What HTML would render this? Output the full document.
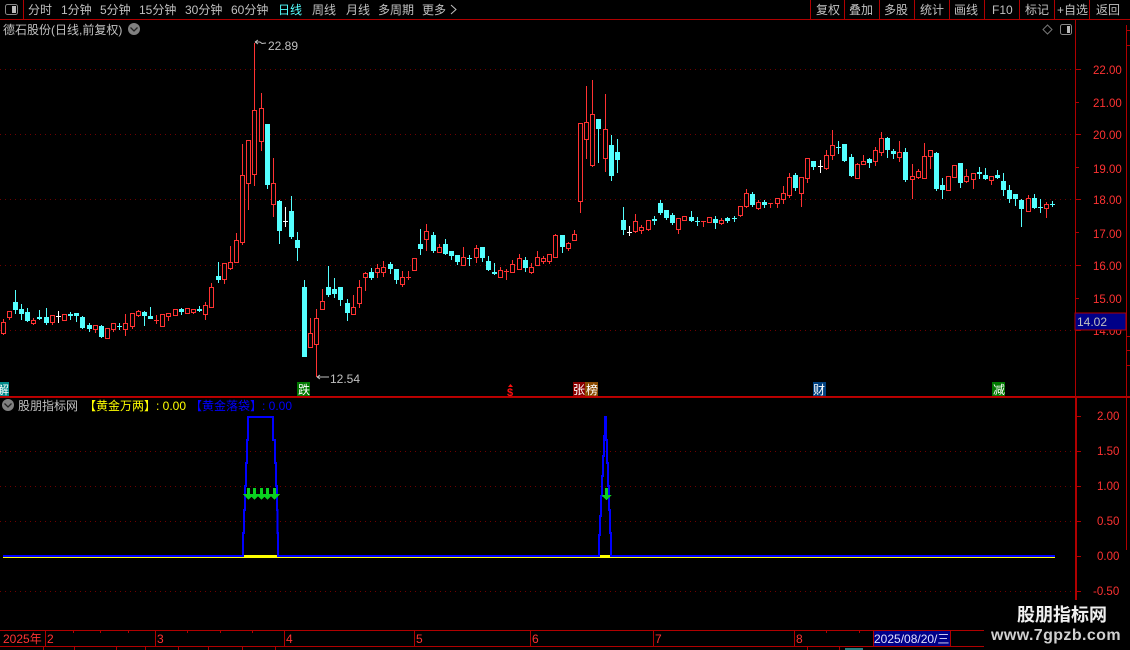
<!DOCTYPE html>
<html lang="zh"><head><meta charset="utf-8"><title>股朋指标网</title>
<style>
html,body{margin:0;padding:0;background:#000;width:1130px;height:650px;overflow:hidden}
svg{display:block;position:absolute;left:0;top:0}
text{font-family:"Liberation Sans","WenQuanYi Zen Hei","Noto Sans CJK SC",sans-serif;font-size:12px;fill:#c0c0c0}
.l{fill:#ff3232;font-size:11.5px}
.d{fill:#ff3232;font-size:12px}
.ln{stroke:#b00000;stroke-width:1;fill:none;shape-rendering:crispEdges}
.g{stroke:#700000;stroke-width:1;stroke-dasharray:1 4;fill:none;shape-rendering:crispEdges}
.c{shape-rendering:crispEdges}
</style></head><body>
<svg width="1130" height="650" viewBox="0 0 1130 650" xmlns="http://www.w3.org/2000/svg">
<!-- toolbar -->
<path class="ln" d="M0 19.5H1130M23.5 0V19M810.5 0V19M844.5 0V19M879.5 0V19M914.5 0V19M949.5 0V19M984.5 0V19M1019.5 0V19M1054.5 0V19M1089.5 0V19"/>
<rect x="5.5" y="4.5" width="12" height="10" rx="2" fill="none" stroke="#888"/><rect x="12" y="6" width="4" height="7" fill="#bbb"/>
<text x="28" y="14">分时</text><text x="61" y="14">1分钟</text><text x="100" y="14">5分钟</text><text x="139" y="14">15分钟</text><text x="185" y="14">30分钟</text><text x="231" y="14">60分钟</text><text x="278" y="14" style="fill:#54ffff">日线</text><text x="312" y="14">周线</text><text x="346" y="14">月线</text><text x="378" y="14">多周期</text><text x="422" y="14">更多</text>
<path d="M451 5l5 4.500l-5 4.500" fill="none" stroke="#c0c0c0"/>
<text x="816" y="14">复权</text><text x="849" y="14">叠加</text><text x="884" y="14">多股</text><text x="920" y="14">统计</text><text x="954" y="14">画线</text><text x="992" y="14">F10</text><text x="1025" y="14">标记</text><text x="1057" y="14">+自选</text><text x="1096" y="14">返回</text>
<text x="3" y="34">德石股份(日线,前复权)</text>
<circle cx="134" cy="29" r="6" fill="#808080"/><path d="M130.500 27.500l3.500 3.500l3.500-3.500" fill="none" stroke="#222" stroke-width="1.300"/>
<path d="M1047.500 25l4.500 4.500l-4.500 4.500l-4.500-4.500z" fill="none" stroke="#777"/>
<rect x="1060.500" y="24.500" width="11" height="10" rx="2" fill="none" stroke="#888"/><rect x="1067" y="26" width="3" height="7" fill="#bbb"/>
<!-- axes -->
<path class="ln" d="M1075.500 19V630M1076.500 397V630M0 396.500H1130M0 397.500H1130M1126.500 25V550"/>
<path class="ln" d="M1075 69.500h6M1075 102.500h4M1075 134.500h6M1075 167.500h4M1075 199.500h6M1075 232.500h4M1075 265.500h6M1075 298.500h4M1075 330.500h6M1075 416.500h6M1075 451.500h6M1075 486.500h6M1075 521.500h6M1075 556.500h6M1075 591.500h6M1126 30.500h4M1126 45.500h4M1126 336.500h4M1126 350.500h4M1126 365.500h4"/>
<path class="g" d="M0 69.500H1075M0 134.500H1075M0 199.500H1075M0 265.500H1075M0 330.500H1075M0 451.500H1075M0 486.500H1075M0 521.500H1075M0 591.500H1075"/>
<text class="l" x="1093" y="74">22.00</text><text class="l" x="1093" y="107">21.00</text><text class="l" x="1093" y="139">20.00</text><text class="l" x="1093" y="173">19.00</text><text class="l" x="1093" y="204">18.00</text><text class="l" x="1093" y="238">17.00</text><text class="l" x="1093" y="270">16.00</text><text class="l" x="1093" y="303">15.00</text><text class="l" x="1093" y="335">14.00</text>
<rect x="1075" y="313" width="51" height="17" fill="#000088" stroke="#b00000"/>
<text x="1077" y="326">14.02</text>
<text class="l" x="1097" y="420">2.00</text><text class="l" x="1097" y="455">1.50</text><text class="l" x="1097" y="490">1.00</text><text class="l" x="1097" y="525">0.50</text><text class="l" x="1097" y="560">0.00</text><text class="l" x="1093" y="595">-0.50</text>
<!-- red wicks -->
<path class="c" fill="none" stroke="#ff3232" d="M3.500 319V335M9.500 311V320M33.500 318V325M52.500 315V325M64.500 314V320M95.500 325V333M107.500 328V338M113.500 323V332M125.500 314V336M132.500 313V329M138.500 310V317M156.500 315V324M154 320.500h5M162.500 314V327M168.500 313V321M175.500 309V316M187.500 308V313M193.500 309V314M205.500 302V320M211.500 283V307M224.500 263V284M230.500 246V270M236.500 233V262M242.500 144V245M248.500 140V210M254.500 43V186M261.500 93V151M273.500 158V217M310.500 318V347M316.500 309V377M322.500 289V309M353.500 295V314M359.500 280V308M365.500 272V291M377.500 264V278M383.500 261V277M402.500 271V287M408.500 271V280M406 277.500h5M414.500 258V270M426.500 224V251M439.500 244V252M463.500 247V266M476.500 245V263M500.500 267V277M506.500 269V280M504 271.500h5M512.500 260V272M519.500 254V269M531.500 263V274M537.500 251V265M543.500 256V264M549.500 254V264M555.500 234V257M568.500 242V251M574.500 230V241M580.500 123V213M586.500 86V159M592.500 80V167M605.500 94V172M635.500 214V233M641.500 225V234M648.500 220V231M678.500 218V234M684.500 216V221M703.500 221V227M701 221.500h5M709.500 217V222M721.500 218V225M740.500 206V217M746.500 189V208M758.500 200V210M770.500 203V208M768 203.500h5M777.500 198V208M783.500 186V204M789.500 173V198M801.500 177V207M807.500 158V183M826.500 150V170M832.500 130V160M857.500 163V178M863.500 155V164M875.500 147V166M881.500 132V156M899.500 141V162M912.500 164V199M918.500 169V179M924.500 143V178M930.500 150V169M948.500 176V191M954.500 165V177M966.500 169V183M973.500 173V189M991.500 176V185M1028.500 195V211M1046.500 202V218"/>
<!-- red bodies -->
<path class="c" fill="#000" stroke="#ff3232" d="M1.500 322.500h4v11h-4zM7.500 311.500h4v6h-4zM31.500 320.500h4v3h-4zM50.500 315.500h4v7h-4zM62.500 314.500h4v6h-4zM93.500 325.500h4v4h-4zM105.500 328.500h4v10h-4zM111.500 323.500h4v6h-4zM123.500 323.500h4v6h-4zM130.500 313.500h4v13h-4zM136.500 311.500h4v4h-4zM160.500 314.500h4v12h-4zM166.500 313.500h4v3h-4zM173.500 309.500h4v6h-4zM185.500 308.500h4v5h-4zM191.500 309.500h4v3h-4zM203.500 305.500h4v9h-4zM209.500 287.500h4v20h-4zM222.500 263.500h4v16h-4zM228.500 262.500h4v6h-4zM234.500 240.500h4v22h-4zM240.500 175.500h4v67h-4zM246.500 140.500h4v43h-4zM252.500 110.500h4v64h-4zM259.500 108.500h4v33h-4zM271.500 183.500h4v21h-4zM308.500 333.500h4v14h-4zM314.500 318.500h4v26h-4zM320.500 301.500h4v8h-4zM351.500 307.500h4v7h-4zM357.500 287.500h4v16h-4zM363.500 273.500h4v4h-4zM375.500 268.500h4v4h-4zM381.500 267.500h4v5h-4zM400.500 277.500h4v7h-4zM412.500 258.500h4v12h-4zM424.500 231.500h4v8h-4zM437.500 247.500h4v5h-4zM461.500 257.500h4v8h-4zM474.500 248.500h4v9h-4zM498.500 270.500h4v7h-4zM510.500 264.500h4v8h-4zM517.500 258.500h4v11h-4zM529.500 267.500h4v5h-4zM535.500 257.500h4v8h-4zM541.500 258.500h4v3h-4zM547.500 254.500h4v7h-4zM553.500 235.500h4v22h-4zM566.500 243.500h4v5h-4zM572.500 234.500h4v6h-4zM578.500 123.500h4v78h-4zM584.500 122.500h4v17h-4zM590.500 114.500h4v51h-4zM603.500 129.500h4v29h-4zM633.500 221.500h4v10h-4zM639.500 227.500h4v3h-4zM646.500 220.500h4v9h-4zM676.500 218.500h4v11h-4zM682.500 216.500h4v4h-4zM707.500 217.500h4v5h-4zM719.500 220.500h4v3h-4zM738.500 206.500h4v9h-4zM744.500 193.500h4v13h-4zM756.500 202.500h4v6h-4zM775.500 198.500h4v5h-4zM781.500 193.500h4v6h-4zM787.500 177.500h4v18h-4zM799.500 177.500h4v16h-4zM805.500 158.500h4v20h-4zM824.500 155.500h4v13h-4zM830.500 145.500h4v10h-4zM855.500 164.500h4v14h-4zM861.500 161.500h4v3h-4zM873.500 150.500h4v11h-4zM879.500 138.500h4v14h-4zM897.500 152.500h4v5h-4zM910.500 176.500h4v3h-4zM916.500 171.500h4v6h-4zM922.500 156.500h4v22h-4zM928.500 150.500h4v6h-4zM946.500 176.500h4v14h-4zM952.500 165.500h4v12h-4zM964.500 176.500h4v5h-4zM971.500 173.500h4v6h-4zM989.500 176.500h4v4h-4zM1026.500 198.500h4v13h-4zM1044.500 204.500h4v4h-4z"/>
<!-- cyan wicks -->
<path class="c" fill="none" stroke="#54ffff" d="M15.500 290V314M21.500 304V320M27.500 308V322M39.500 310V320M46.500 308V325M70.500 312V320M76.500 313V322M82.500 316V329M89.500 323V332M101.500 325V338M119.500 323V330M144.500 311V326M150.500 307V319M181.500 308V315M199.500 306V312M218.500 262V283M267.500 124V189M279.500 200V244M291.500 196V239M297.500 232V261M304.500 280V357M328.500 266V297M334.500 278V298M340.500 287V306M347.500 299V321M371.500 268V280M390.500 262V274M396.500 269V284M420.500 229V255M433.500 232V253M445.500 239V255M451.500 251V260M457.500 255V265M469.500 255V266M482.500 247V262M488.500 256V271M494.500 263V275M525.500 257V272M562.500 235V253M598.500 119V163M611.500 135V181M617.500 139V173M623.500 207V235M654.500 216V225M660.500 200V215M666.500 210V220M672.500 213V225M691.500 211V222M697.500 217V226M715.500 216V229M727.500 217V223M734.500 216V222M752.500 192V207M764.500 200V208M795.500 173V191M813.500 161V170M838.500 141V154M844.500 144V162M851.500 154V177M869.500 158V168M887.500 137V158M893.500 149V159M905.500 148V182M936.500 152V191M942.500 178V199M960.500 163V188M979.500 167V179M985.500 168V180M997.500 170V179M1003.500 173V196M1009.500 185V203M1015.500 194V206M1021.500 199V227M1034.500 194V209M1040.500 199V213M1052.500 201V207"/>
<!-- cyan bodies -->
<path class="c" fill="#54ffff" d="M13 302h5v8h-5zM19 309h5v5h-5zM25 312h5v9h-5zM37 317h5v2h-5zM44 317h5v6h-5zM68 314h5v2h-5zM74 313h5v3h-5zM80 317h5v11h-5zM87 325h5v4h-5zM99 326h5v11h-5zM117 326h5v1h-5zM142 312h5v4h-5zM148 316h5v3h-5zM179 309h5v3h-5zM197 309h5v2h-5zM216 276h5v4h-5zM265 124h5v61h-5zM277 201h5v30h-5zM289 211h5v26h-5zM295 240h5v8h-5zM302 287h5v70h-5zM326 287h5v8h-5zM332 289h5v5h-5zM338 287h5v13h-5zM345 303h5v10h-5zM369 272h5v6h-5zM388 264h5v5h-5zM394 269h5v11h-5zM418 244h5v5h-5zM431 235h5v16h-5zM443 244h5v10h-5zM449 251h5v5h-5zM455 255h5v7h-5zM467 258h5v1h-5zM480 247h5v11h-5zM486 261h5v9h-5zM492 272h5v2h-5zM523 260h5v8h-5zM560 235h5v12h-5zM596 119h5v10h-5zM609 145h5v31h-5zM615 152h5v8h-5zM621 220h5v10h-5zM652 219h5v2h-5zM658 203h5v10h-5zM664 210h5v8h-5zM670 215h5v8h-5zM689 217h5v4h-5zM695 221h5v1h-5zM713 219h5v4h-5zM725 218h5v3h-5zM732 218h5v1h-5zM750 194h5v11h-5zM762 202h5v3h-5zM793 175h5v13h-5zM811 161h5v6h-5zM836 147h5v1h-5zM842 144h5v17h-5zM849 157h5v19h-5zM867 159h5v4h-5zM885 138h5v12h-5zM891 151h5v3h-5zM903 152h5v28h-5zM934 153h5v36h-5zM940 185h5v5h-5zM958 163h5v20h-5zM977 172h5v2h-5zM983 175h5v4h-5zM995 175h5v3h-5zM1001 181h5v9h-5zM1007 190h5v9h-5zM1013 194h5v5h-5zM1019 200h5v9h-5zM1032 198h5v10h-5zM1038 207h5v1h-5zM1050 204h5v1h-5z"/>
<!-- white doji -->
<path class="c" fill="none" stroke="#fff" d="M58.500 311V323M56 316.500h5M285.500 207V227M283 221.500h5M629.500 226V236M627 232.500h5M820.500 160V173M818 166.500h5"/>
<!-- extremes -->
<path d="M255 42l3-2M255 42l3 2M255 42h5l2 1.500l4-0.500" fill="none" stroke="#c0c0c0"/>
<text x="268" y="50">22.89</text>
<path d="M317 377h12M317 377l3-2M317 377l3 2" fill="none" stroke="#c0c0c0"/>
<text x="330" y="383">12.54</text>
<!-- event markers -->
<rect x="0" y="382" width="9" height="14" fill="#008a8a"/><text x="-3" y="394" style="fill:#fff">解</text>
<rect x="297" y="382" width="13" height="14" fill="#007800"/><text x="298" y="394" style="fill:#fff">跌</text>
<text x="507" y="396" style="fill:#ff1010;font-weight:bold;font-size:11px">$</text><path d="M510.500 384l-2.500 3h5z" fill="#ff1010"/>
<rect x="573" y="382" width="12" height="14" fill="#8a0000"/><rect x="585" y="382" width="13" height="14" fill="#8a4a00"/>
<text x="573" y="394" style="fill:#fff">张</text><text x="586" y="394" style="fill:#fff">榜</text>
<rect x="813" y="382" width="13" height="14" fill="#00407f"/><text x="813" y="394" style="fill:#fff">财</text>
<rect x="992" y="382" width="13" height="14" fill="#007800"/><text x="993" y="394" style="fill:#fff">减</text>
<path d="M0 396.500H1075" stroke="#c00000" class="c"/>
<!-- lower panel title -->
<circle cx="8" cy="405" r="6" fill="#808080"/><path d="M4.500 403.500l3.500 3.500l3.500-3.500" fill="none" stroke="#222" stroke-width="1.300"/>
<text x="18" y="410">股朋指标网</text>
<text x="84" y="410" style="fill:#ffff00">【黄金万两】: 0.00</text>
<text x="190" y="410" style="fill:#0000ff">【黄金落袋】: 0.00</text>
<!-- lines -->
<path class="c" d="M3 557.500H1055" stroke="#ffff00" fill="none"/>
<path class="c" d="M243 555h36v3h-36zM599 555h12v3h-12z" fill="#ffff00"/>
<path class="c" fill="none" stroke="#0000ff" stroke-width="2" d="M3 556H243V533H244V510H245V486H246V463H247V440H248V417H273V440H275V463H276V486H277V510H277.500V533H278V556H599V535H600V516H601V496H602V476H603V456H604V436H605V417H606V440H607V463H608V486H609V510H610V533H611V556H1055"/>
<!-- green arrows -->
<path class="c" fill="#0ad020" d="M247 488h3v6h4l-5.500 6l-5.500-6h4zM253 488h3v6h4l-5.500 6l-5.500-6h4zM260 488h3v6h4l-5.500 6l-5.500-6h4zM266 488h3v6h4l-5.500 6l-5.500-6h4zM273 488h3v6h4l-5.500 6l-5.500-6h4zM605 488h3v7h4l-5.500 5l-5.500-5h4z"/>
<!-- date axis -->
<path class="ln" d="M0 630.500H984M0 646.500H984M45.500 630V646M155.500 630V646M284.500 630V646M414.500 630V646M530.500 630V646M653.500 630V646M794.500 630V646M873.500 630V646M950.500 630V646M73.500 631v2M100.500 631v2M128.500 631v2M187.500 631v2M220.500 631v2M252.500 631v2M826.500 631v2M859.500 631v2M43.500 647V650M74.500 647V650M116.500 647V650M145.500 647V650M178.500 647V650M208.500 647V650M242.500 647V650M275.500 647V650M807.500 647V650M839.500 647V650"/>
<rect x="874" y="631" width="76" height="15" fill="#000088"/>
<text class="d" x="3" y="643">2025年</text><text class="d" x="47" y="643">2</text><text class="d" x="157" y="643">3</text><text class="d" x="286" y="643">4</text><text class="d" x="416" y="643">5</text><text class="d" x="532" y="643">6</text><text class="d" x="655" y="643">7</text><text class="d" x="796" y="643">8</text>
<text x="874" y="643" style="fill:#e0e0ff">2025/08/20/三</text>
<path d="M845 649h18" stroke="#54ffff"/>
<!-- watermark -->
<rect x="984" y="600" width="146" height="50" fill="#000"/>
<text x="1017" y="621" style="fill:#f0f0f0;font-size:18px;font-weight:bold">股朋指标网</text>
<text x="991" y="640" style="fill:#d0d0d0;font-size:16px;font-weight:bold;letter-spacing:.4px">www.7gpzb.com</text>
</svg>
</body></html>
